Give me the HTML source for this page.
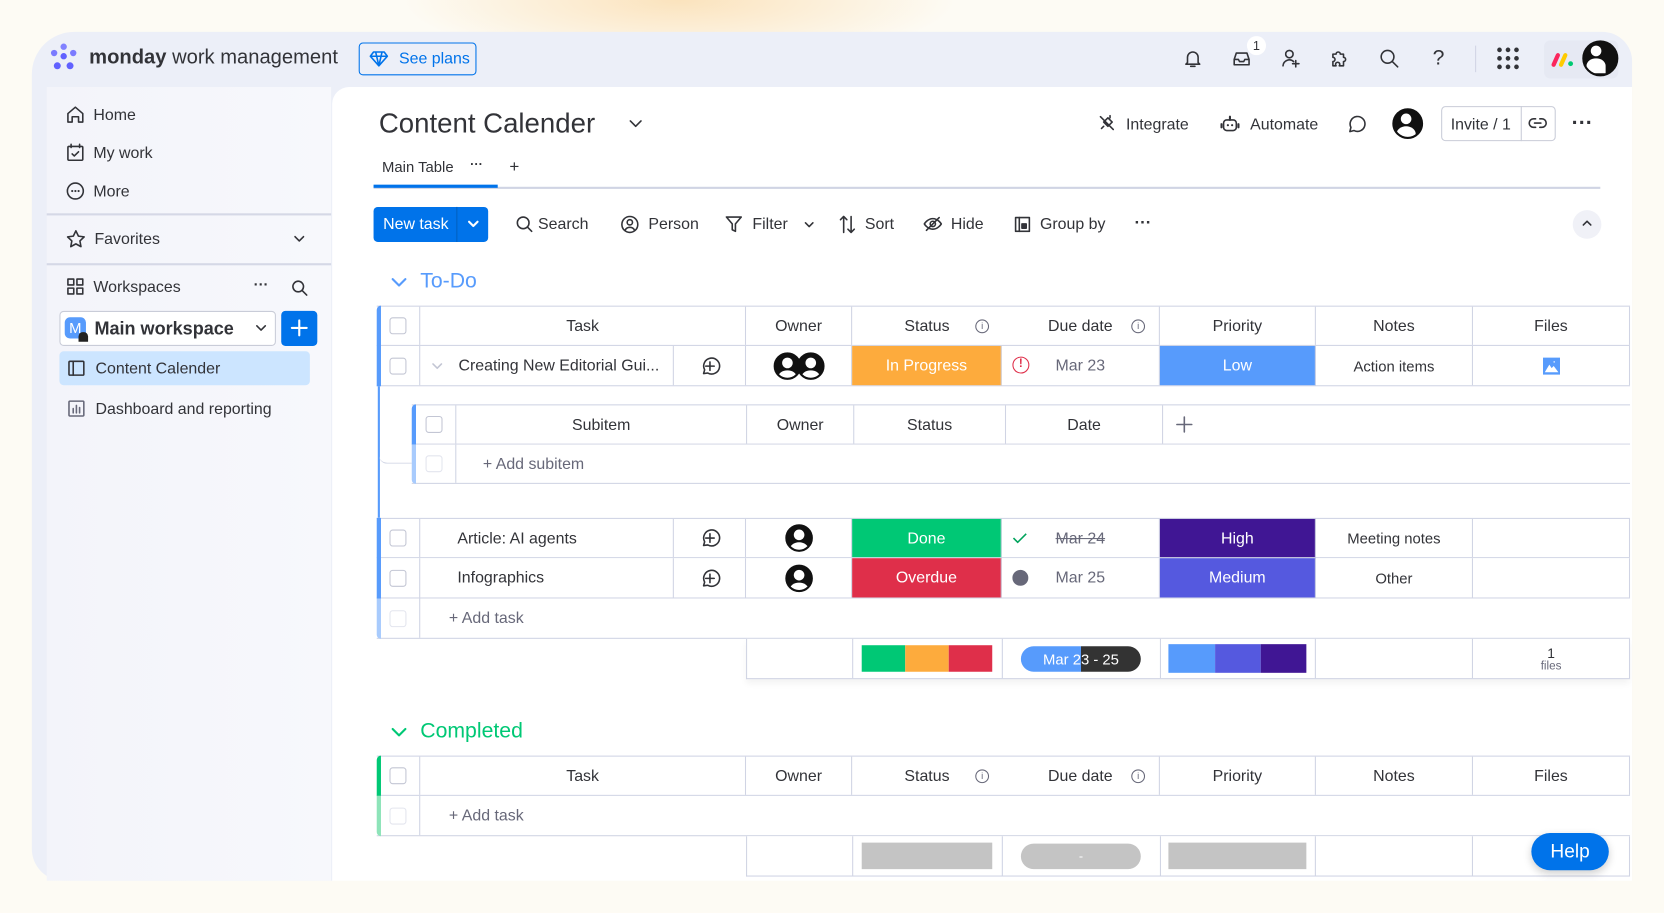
<!DOCTYPE html>
<html><head><meta charset="utf-8">
<style>
*{box-sizing:border-box;margin:0;padding:0}
html,body{width:1664px;height:913px;overflow:hidden}
body{font-family:"Liberation Sans",sans-serif;color:#323338;background:#fdfbf4;position:relative}
#s{position:absolute;left:0;top:0;width:1568px;height:860px;transform:scale(1.06122);transform-origin:0 0;
 background:radial-gradient(ellipse 260px 60px at 640px 0px,#fbe3bd 0%,rgba(251,227,189,0) 100%),#fdfbf4}
.a{position:absolute}
.app{left:30px;top:30px;width:1508px;height:800px;background:#eceff8;border-radius:40px 28px 0 30px;overflow:hidden}
.side{left:44px;top:82px;width:268px;height:748px;background:linear-gradient(90deg,#f3f4fa,#f7f8fc)}
.main{left:313px;top:82px;width:1225px;height:748px;background:#fff;border-radius:16px 0 0 0}
.t{position:absolute;white-space:nowrap;font-size:15px;line-height:1}
.ic{position:absolute;fill:none;stroke:#323338;stroke-width:1.5;stroke-linecap:round;stroke-linejoin:round}
.row{position:absolute;display:flex;border-bottom:1px solid #d0d4e4;background:#fff}
.c{border-right:1px solid #d0d4e4;display:flex;align-items:center;justify-content:center;font-size:15px;white-space:nowrap;position:relative;height:100%}
.cb{width:16px;height:16px;border:1px solid #c3c6d4;border-radius:3px;background:#fff}
.av{width:26px;height:26px;border-radius:50%;background:#111;position:relative;border:2px solid #111;overflow:hidden}
.av:before{content:"";position:absolute;left:6px;top:3px;width:10px;height:10px;border-radius:50%;background:#fff}
.av:after{content:"";position:absolute;left:2px;top:15px;width:18px;height:14px;border-radius:50% 50% 0 0;background:#fff}
.info{position:absolute;top:12px;width:13px;height:13px;border:1px solid #676879;border-radius:50%;font-size:9px;text-align:center;line-height:11px;color:#676879}
</style></head><body><div id="s">

<div class="a app"></div>
<svg class="a" style="left:46px;top:40px" width="28" height="28" viewBox="0 0 28 28"><g fill="#6161ff"><circle cx="14" cy="4" r="3" fill="#8181ff"/><circle cx="5" cy="10" r="3" fill="#7b7bff"/><circle cx="23" cy="10" r="3" fill="#7b7bff"/><circle cx="14" cy="13" r="3"/><circle cx="8" cy="22" r="3.3"/><circle cx="20" cy="22" r="3.3"/></g></svg>
<div class="t" style="left:84px;top:45px;font-size:19px"><b>monday</b> work management</div>
<div class="a" style="left:338px;top:40px;width:111px;height:31px;border:1.5px solid #0073ea;border-radius:4px"></div>
<svg class="ic" style="left:348px;top:47px;stroke:#0073ea" width="18" height="17" viewBox="0 0 18 17"><path d="M4 2h10l3 4-8 9-8-9z M1 6h16 M6 2l3 13 3-13"/></svg>
<div class="t" style="left:376px;top:48px;color:#0073ea">See plans</div>

<svg class="ic" style="left:1114px;top:45px" width="20" height="20" viewBox="0 0 20 20"><path d="M5 14V9a5 5 0 0110 0v5l1.5 1.5h-13z M8 17.5h4"/></svg>
<svg class="ic" style="left:1160px;top:45px" width="20" height="20" viewBox="0 0 20 20"><path d="M3 11l2-6h10l2 6v5H3z M3 11h4l1 2h4l1-2h4"/></svg>
<div class="a" style="left:1175px;top:34px;width:18px;height:18px;border-radius:50%;background:#fff;font-size:12px;text-align:center;line-height:18px">1</div>
<svg class="ic" style="left:1206px;top:45px" width="20" height="20" viewBox="0 0 20 20"><circle cx="9" cy="6" r="3.5"/><path d="M3 17a6 6 0 0110-4 M15 12v6 M12 15h6"/></svg>
<svg class="ic" style="left:1252px;top:45px" width="20" height="20" viewBox="0 0 20 20"><path d="M4 6h3a2 2 0 114 0h3v3a2 2 0 110 4v4h-4a2 2 0 10-3 0H4v-4a2 2 0 100-4z"/></svg>
<svg class="ic" style="left:1299px;top:45px" width="20" height="20" viewBox="0 0 20 20"><circle cx="8.5" cy="8.5" r="6"/><path d="M13 13l5 5"/></svg>
<div class="t" style="left:1350px;top:45px;font-size:20px">?</div>
<div class="a" style="left:1390px;top:43px;width:1px;height:25px;background:#d0d4e4"></div>
<svg class="a" style="left:1410px;top:44px" width="22" height="22" viewBox="0 0 22 22" fill="#323338"><circle cx="3" cy="3" r="2.2"/><circle cx="11" cy="3" r="2.2"/><circle cx="19" cy="3" r="2.2"/><circle cx="3" cy="11" r="2.2"/><circle cx="11" cy="11" r="2.2"/><circle cx="19" cy="11" r="2.2"/><circle cx="3" cy="19" r="2.2"/><circle cx="11" cy="19" r="2.2"/><circle cx="19" cy="19" r="2.2"/></svg>
<div class="a" style="left:1455px;top:38px;width:70px;height:36px;border-radius:6px;background:#e6e9f3"></div>
<svg class="a" style="left:1461px;top:48px" width="24" height="16" viewBox="0 0 24 16"><path d="M3 13L7 4" stroke="#fb275d" stroke-width="4" stroke-linecap="round"/><path d="M10 13l4-9" stroke="#ffcb00" stroke-width="4" stroke-linecap="round"/><circle cx="19" cy="12" r="2.3" fill="#00ca72"/></svg>
<div class="av" style="position:absolute;left:1491px;top:38px;width:34px;height:34px"></div>

<div class="a side"></div>
<svg class="ic" style="left:62px;top:99px" width="18" height="18" viewBox="0 0 18 18"><path d="M2 8l7-6 7 6v8h-4v-5H6v5H2z"/></svg>
<div class="t" style="left:88px;top:101px">Home</div>
<svg class="ic" style="left:62px;top:135px" width="18" height="18" viewBox="0 0 18 18"><rect x="2" y="3" width="14" height="13" rx="1"/><path d="M5 1v3 M13 1v3 M6 10l2 2 4-4"/></svg>
<div class="t" style="left:88px;top:137px">My work</div>
<svg class="ic" style="left:62px;top:171px" width="18" height="18" viewBox="0 0 18 18"><circle cx="9" cy="9" r="7.5"/><path d="M6 9h.1 M9 9h.1 M12 9h.1" stroke-width="2"/></svg>
<div class="t" style="left:88px;top:173px">More</div>
<div class="a" style="left:44px;top:201px;width:268px;height:1.5px;background:#d5d8e6"></div>
<svg class="ic" style="left:62px;top:216px" width="19" height="19" viewBox="0 0 19 19"><path d="M9.5 1.5l2.4 5 5.4.7-4 3.8 1 5.4-4.8-2.6-4.8 2.6 1-5.4-4-3.8 5.4-.7z"/></svg>
<div class="t" style="left:89px;top:218px">Favorites</div>
<svg class="ic" style="left:276px;top:220px" width="12" height="10" viewBox="0 0 12 10"><path d="M2 3l4 4 4-4"/></svg>
<div class="a" style="left:44px;top:248px;width:268px;height:1.5px;background:#d5d8e6"></div>
<svg class="ic" style="left:63px;top:262px" width="16" height="16" viewBox="0 0 16 16"><rect x="1" y="1" width="5.5" height="5.5"/><rect x="9.5" y="1" width="5.5" height="5.5"/><rect x="1" y="9.5" width="5.5" height="5.5"/><rect x="9.5" y="9.5" width="5.5" height="5.5"/></svg>
<div class="t" style="left:88px;top:263px">Workspaces</div>
<div class="t" style="left:239px;top:261px;font-size:14px;font-weight:bold">···</div>
<svg class="ic" style="left:274px;top:263px" width="16" height="16" viewBox="0 0 16 16"><circle cx="7" cy="7" r="5"/><path d="M11 11l4 4"/></svg>
<div class="a" style="left:56px;top:293px;width:204px;height:33px;border:1px solid #c9ccd8;border-radius:4px;background:#fff"></div>
<div class="a" style="left:61px;top:299px;width:20px;height:20px;border-radius:5px;background:#579bfc;color:#fff;font-size:14px;text-align:center;line-height:20px">M</div>
<div class="a" style="left:74px;top:313px;width:9px;height:9px;background:#222;border-radius:4px 4px 0 0"></div>
<div class="t" style="left:89px;top:301px;font-size:17px;font-weight:bold">Main workspace</div>
<svg class="ic" style="left:240px;top:304px" width="12" height="10" viewBox="0 0 12 10"><path d="M2 3l4 4 4-4"/></svg>
<div class="a" style="left:265px;top:293px;width:34px;height:33px;border-radius:4px;background:#0073ea"></div>
<svg class="ic" style="left:272px;top:299px;stroke:#fff;stroke-width:2" width="20" height="20" viewBox="0 0 20 20"><path d="M10 3v14 M3 10h14"/></svg>
<div class="a" style="left:56px;top:331px;width:236px;height:32px;border-radius:4px;background:#cce5ff"></div>
<svg class="ic" style="left:64px;top:339px" width="16" height="16" viewBox="0 0 16 16"><rect x="1" y="1.5" width="14" height="13" rx="1"/><path d="M5 1.5v13"/></svg>
<div class="t" style="left:90px;top:340px">Content Calender</div>
<svg class="ic" style="left:64px;top:377px;stroke:#676879" width="16" height="16" viewBox="0 0 16 16"><rect x="1" y="1" width="14" height="14" rx="1"/><path d="M5 12V8 M8 12V5 M11 12V7"/></svg>
<div class="t" style="left:90px;top:378px">Dashboard and reporting</div>

<div class="a main"></div>
<div class="t" style="left:357px;top:103px;font-size:26px">Content Calender</div>
<svg class="ic" style="left:592px;top:110px" width="14" height="12" viewBox="0 0 14 12"><path d="M2 4l5 5 5-5"/></svg>
<svg class="ic" style="left:1034px;top:107px" width="18" height="18" viewBox="0 0 18 18"><path d="M3 3l12 12 M6 8l4-4 4 4-4 4z M4 14l2-2 M12 2v2"/></svg>
<div class="t" style="left:1061px;top:110px">Integrate</div>
<svg class="ic" style="left:1150px;top:108px" width="18" height="18" viewBox="0 0 18 18"><rect x="3" y="5" width="12" height="10" rx="3"/><path d="M9 2v3 M7 10h.1 M11 10h.1 M1 9v3 M17 9v3" stroke-width="2"/></svg>
<div class="t" style="left:1178px;top:110px">Automate</div>
<svg class="ic" style="left:1268px;top:107px" width="20" height="20" viewBox="0 0 20 20"><path d="M4 17l1-4a7 7 0 113 3z"/></svg>
<div class="av" style="position:absolute;left:1312px;top:102px;width:29px;height:29px"></div>
<div class="a" style="left:1358px;top:100px;width:108px;height:33px;border:1px solid #c9ccd8;border-radius:4px"></div>
<div class="a" style="left:1433px;top:100px;width:1px;height:33px;background:#c9ccd8"></div>
<div class="t" style="left:1367px;top:110px">Invite / 1</div>
<svg class="ic" style="left:1440px;top:108px" width="18" height="16" viewBox="0 0 18 16"><path d="M7 4H5a4 4 0 000 8h2 M11 4h2a4 4 0 010 8h-2 M6 8h6"/></svg>
<div class="t" style="left:1481px;top:106px;font-size:20px;font-weight:bold">···</div>

<div class="t" style="left:360px;top:150px;font-size:14px">Main Table</div>
<div class="t" style="left:443px;top:149px;font-size:12px;font-weight:bold">···</div>
<div class="t" style="left:480px;top:150px;font-size:16px">+</div>
<div class="a" style="left:352px;top:176px;width:1156px;height:1.5px;background:#d0d4e4"></div>
<div class="a" style="left:352px;top:174px;width:117px;height:3px;background:#0073ea"></div>

<div class="a" style="left:352px;top:195px;width:108px;height:33px;background:#0073ea;border-radius:4px"></div>
<div class="a" style="left:430px;top:195px;width:1px;height:33px;background:#0060c0"></div>
<div class="t" style="left:361px;top:204px;color:#fff">New task</div>
<svg class="ic" style="left:440px;top:206px;stroke:#fff;stroke-width:2" width="12" height="10" viewBox="0 0 12 10"><path d="M2 3l4 4 4-4"/></svg>
<svg class="ic" style="left:486px;top:203px" width="16" height="16" viewBox="0 0 16 16"><circle cx="7" cy="7" r="5.5"/><path d="M11 11l4 4"/></svg>
<div class="t" style="left:507px;top:204px">Search</div>
<svg class="ic" style="left:585px;top:203px" width="17" height="17" viewBox="0 0 17 17"><circle cx="8.5" cy="8.5" r="7.5"/><circle cx="8.5" cy="6.5" r="2.5"/><path d="M4 14a5 5 0 019 0"/></svg>
<div class="t" style="left:611px;top:204px">Person</div>
<svg class="ic" style="left:683px;top:203px" width="17" height="17" viewBox="0 0 17 17"><path d="M1.5 1.5h14l-5.5 6.5v7l-3-1.5v-5.5z"/></svg>
<div class="t" style="left:709px;top:204px">Filter</div>
<svg class="ic" style="left:757px;top:207px" width="11" height="9" viewBox="0 0 11 9"><path d="M2 3l3.5 3.5 3.5-3.5"/></svg>
<svg class="ic" style="left:790px;top:202px" width="17" height="19" viewBox="0 0 17 19"><path d="M5 17V2 M2 5l3-3 3 3 M12 2v15 M9 14l3 3 3-3"/></svg>
<div class="t" style="left:815px;top:204px">Sort</div>
<svg class="ic" style="left:870px;top:203px" width="18" height="16" viewBox="0 0 18 16"><path d="M1 8s3-5 8-5 8 5 8 5-3 5-8 5-8-5-8-5z M3 14L15 2"/><circle cx="9" cy="8" r="2.5"/></svg>
<div class="t" style="left:896px;top:204px">Hide</div>
<svg class="ic" style="left:956px;top:204px" width="15" height="15" viewBox="0 0 15 15"><rect x="1" y="1" width="13" height="13"/><path d="M4.5 1v13"/><rect x="7" y="7" width="4" height="4" fill="#323338"/></svg>
<div class="t" style="left:980px;top:204px">Group by</div>
<div class="t" style="left:1069px;top:203px;font-size:16px;font-weight:bold">···</div>
<div class="a" style="left:1482px;top:198px;width:27px;height:27px;border-radius:50%;background:#f0f1f7"></div>
<svg class="ic" style="left:1490px;top:206px" width="11" height="9" viewBox="0 0 11 9"><path d="M2 6l3.5-3.5 3.5 3.5"/></svg>

<svg class="ic" style="left:368px;top:259px;stroke:#579bfc;stroke-width:2" width="16" height="14" viewBox="0 0 16 14"><path d="M2 4l6 6 6-6"/></svg>
<div class="t" style="left:396px;top:255px;font-size:20px;color:#579bfc;font-weight:500">To-Do</div>

<div class="row" style="left:355px;top:288px;width:1181px;height:38px;border-top:1px solid #d0d4e4">
 <div class="c" style="width:41px"><div class="cb"></div></div>
 <div class="c" style="width:307px">Task</div>
 <div class="c" style="width:100px">Owner</div>
 <div class="c" style="width:141px;border-right:none">Status<span class="info" style="left:116px">i</span></div>
 <div class="c" style="width:149px">Due date<span class="info" style="left:122px">i</span></div>
 <div class="c" style="width:147px">Priority</div>
 <div class="c" style="width:148px">Notes</div>
 <div class="c" style="width:148px">Files</div>
</div>
<div class="row" style="left:355px;top:326px;width:1181px;height:38px">
 <div class="c" style="width:41px"><div class="cb"></div></div>
 <div class="c" style="width:239px;justify-content:flex-start;padding-left:10px"><svg class="ic" style="position:static;stroke:#c3c6d4" width="12" height="10" viewBox="0 0 12 10"><path d="M2 3l4 4 4-4"/></svg><span style="margin-left:14px">Creating New Editorial Gui...</span></div>
 <div class="c" style="width:68px"><svg class="ic" style="position:static" width="20" height="20" viewBox="0 0 20 20"><path d="M4 17l1-3.5a7.5 7.5 0 113 3z M10 6v8 M6 10h8"/></svg></div>
 <div class="c" style="width:100px"><div class="av"></div><div class="av" style="margin-left:-4px"></div></div>
 <div class="c" style="width:141px;background:#fdab3d;color:#fff">In Progress</div>
 <div class="c" style="width:149px;color:#676879"><span style="position:absolute;left:10px;top:10px;width:16px;height:16px;border:1.5px solid #df2f4a;border-radius:50%;color:#df2f4a;font-size:11px;text-align:center;line-height:13px;font-weight:bold">!</span>Mar 23</div>
 <div class="c" style="width:147px;background:#579bfc;color:#fff">Low</div>
 <div class="c" style="width:148px;font-size:14px">Action items</div>
 <div class="c" style="width:148px"><svg width="18" height="18" viewBox="0 0 18 18"><rect x="1" y="1" width="16" height="16" fill="#579bfc"/><path d="M4 14l3-5 2 3 2-2 3 4z M11 5h1" stroke="#fff" fill="#fff" stroke-width="1.5"/></svg></div>
</div>
<div class="a" style="left:355px;top:288px;width:4px;height:76px;background:#579bfc;border-radius:4px 0 0 0"></div>
<div class="a" style="left:356px;top:364px;width:1.5px;height:124px;background:#579bfc"></div>
<div class="a" style="left:357px;top:383px;width:32px;height:54px;border-bottom:1px solid #d0d4e4;border-radius:0 0 0 8px"></div>
<div class="row" style="left:388px;top:381px;width:1148px;height:38px;border-top:1px solid #d0d4e4">
 <div class="c" style="width:42px"><div class="cb"></div></div>
 <div class="c" style="width:274px">Subitem</div>
 <div class="c" style="width:101px">Owner</div>
 <div class="c" style="width:143px">Status</div>
 <div class="c" style="width:148px">Date</div>
 <div class="c" style="width:440px;border-right:none;justify-content:flex-start;padding-left:12px"><svg class="ic" style="position:static;stroke:#676879" width="16" height="16" viewBox="0 0 16 16"><path d="M8 1v14 M1 8h14"/></svg></div>
</div>
<div class="row" style="left:388px;top:419px;width:1148px;height:37px">
 <div class="c" style="width:42px"><div class="cb" style="border-color:#e3e5ee"></div></div>
 <div class="c" style="width:1106px;border-right:none;justify-content:flex-start;padding-left:25px;color:#676879">+ Add subitem</div>
</div>
<div class="a" style="left:388px;top:381px;width:4px;height:38px;background:#579bfc;border-radius:4px 0 0 0"></div>
<div class="a" style="left:388px;top:419px;width:4px;height:37px;background:#a8cbfd;border-radius:0 0 0 4px"></div>

<div class="row" style="left:355px;top:488px;width:1181px;height:38px;border-top:1px solid #d0d4e4">
 <div class="c" style="width:41px"><div class="cb"></div></div>
 <div class="c" style="width:239px;justify-content:flex-start;padding-left:35px">Article: AI agents</div>
 <div class="c" style="width:68px"><svg class="ic" style="position:static" width="20" height="20" viewBox="0 0 20 20"><path d="M4 17l1-3.5a7.5 7.5 0 113 3z M10 6v8 M6 10h8"/></svg></div>
 <div class="c" style="width:100px"><div class="av"></div></div>
 <div class="c" style="width:141px;background:#00c875;color:#fff">Done</div>
 <div class="c" style="width:149px;color:#676879"><svg style="position:absolute;left:10px;top:12px" width="14" height="12" viewBox="0 0 14 12"><path d="M1 6l4 4 8-8" stroke="#00a35c" stroke-width="1.5" fill="none"/></svg><s>Mar 24</s></div>
 <div class="c" style="width:147px;background:#401694;color:#fff">High</div>
 <div class="c" style="width:148px;font-size:14px">Meeting notes</div>
 <div class="c" style="width:148px"></div>
</div>
<div class="row" style="left:355px;top:526px;width:1181px;height:38px">
 <div class="c" style="width:41px"><div class="cb"></div></div>
 <div class="c" style="width:239px;justify-content:flex-start;padding-left:35px">Infographics</div>
 <div class="c" style="width:68px"><svg class="ic" style="position:static" width="20" height="20" viewBox="0 0 20 20"><path d="M4 17l1-3.5a7.5 7.5 0 113 3z M10 6v8 M6 10h8"/></svg></div>
 <div class="c" style="width:100px"><div class="av"></div></div>
 <div class="c" style="width:141px;background:#df2f4a;color:#fff">Overdue</div>
 <div class="c" style="width:149px;color:#676879"><span style="position:absolute;left:10px;top:11px;width:15px;height:15px;border-radius:50%;background:#676879"></span>Mar 25</div>
 <div class="c" style="width:147px;background:#5559df;color:#fff">Medium</div>
 <div class="c" style="width:148px;font-size:14px">Other</div>
 <div class="c" style="width:148px"></div>
</div>
<div class="row" style="left:355px;top:564px;width:1181px;height:38px">
 <div class="c" style="width:41px"><div class="cb" style="border-color:#e3e5ee"></div></div>
 <div class="c" style="width:1140px;border-right:none;justify-content:flex-start;padding-left:27px;color:#676879">+ Add task</div>
</div>
<div class="a" style="left:355px;top:488px;width:4px;height:76px;background:#579bfc"></div>
<div class="a" style="left:355px;top:564px;width:4px;height:38px;background:#a8cbfd;border-radius:0 0 0 4px"></div>
<div class="row" style="left:703px;top:602px;width:833px;height:38px;border-left:1px solid #d0d4e4;box-shadow:0 4px 6px rgba(0,0,0,.05)">
 <div class="c" style="width:100px"></div>
 <div class="c" style="width:141px"><div style="display:flex;width:123px;height:25px"><div style="flex:1;background:#00c875"></div><div style="flex:1;background:#fdab3d"></div><div style="flex:1;background:#df2f4a"></div></div></div>
 <div class="c" style="width:149px"><div style="width:113px;height:24px;border-radius:12px;background:linear-gradient(90deg,#579bfc 50%,#333 50%);color:#fff;font-size:14px;text-align:center;line-height:24px">Mar 23 - 25</div></div>
 <div class="c" style="width:147px"><div style="display:flex;width:130px;height:27px"><div style="flex:1;background:#579bfc"></div><div style="flex:1;background:#5559df"></div><div style="flex:1;background:#401694"></div></div></div>
 <div class="c" style="width:148px"></div>
 <div class="c" style="width:148px;flex-direction:column;font-size:13px;line-height:12px;padding-top:2px">1<span style="font-size:11px;color:#676879">files</span></div>
</div>

<svg class="ic" style="left:368px;top:683px;stroke:#00c875;stroke-width:2" width="16" height="14" viewBox="0 0 16 14"><path d="M2 4l6 6 6-6"/></svg>
<div class="t" style="left:396px;top:679px;font-size:20px;color:#00c875;font-weight:500">Completed</div>
<div class="row" style="left:355px;top:712px;width:1181px;height:38px;border-top:1px solid #d0d4e4">
 <div class="c" style="width:41px"><div class="cb"></div></div>
 <div class="c" style="width:307px">Task</div>
 <div class="c" style="width:100px">Owner</div>
 <div class="c" style="width:141px;border-right:none">Status<span class="info" style="left:116px">i</span></div>
 <div class="c" style="width:149px">Due date<span class="info" style="left:122px">i</span></div>
 <div class="c" style="width:147px">Priority</div>
 <div class="c" style="width:148px">Notes</div>
 <div class="c" style="width:148px">Files</div>
</div>
<div class="row" style="left:355px;top:750px;width:1181px;height:38px">
 <div class="c" style="width:41px"><div class="cb" style="border-color:#e3e5ee"></div></div>
 <div class="c" style="width:1140px;border-right:none;justify-content:flex-start;padding-left:27px;color:#676879">+ Add task</div>
</div>
<div class="a" style="left:355px;top:712px;width:4px;height:38px;background:#00c875;border-radius:4px 0 0 0"></div>
<div class="a" style="left:355px;top:750px;width:4px;height:38px;background:#8ee4b9;border-radius:0 0 0 4px"></div>
<div class="row" style="left:703px;top:788px;width:833px;height:38px;border-left:1px solid #d0d4e4">
 <div class="c" style="width:100px"></div>
 <div class="c" style="width:141px"><div style="width:123px;height:25px;background:#c4c4c4"></div></div>
 <div class="c" style="width:149px"><div style="width:113px;height:24px;border-radius:12px;background:#c4c4c4;color:#fff;font-size:12px;text-align:center;line-height:24px">-</div></div>
 <div class="c" style="width:147px"><div style="width:130px;height:25px;background:#c4c4c4"></div></div>
 <div class="c" style="width:148px"></div>
 <div class="c" style="width:148px"></div>
</div>
<div class="a" style="left:1443px;top:785px;width:73px;height:35px;border-radius:18px;background:#0073ea;color:#fff;font-size:18px;text-align:center;line-height:35px;box-shadow:0 3px 8px rgba(0,0,0,.2)">Help</div>
<div class="a" style="left:1538px;top:30px;width:30px;height:830px;background:#fdfbf4"></div>
<div class="a" style="left:0;top:830px;width:1568px;height:30px;background:#fdfbf4"></div>
</div></body></html>
